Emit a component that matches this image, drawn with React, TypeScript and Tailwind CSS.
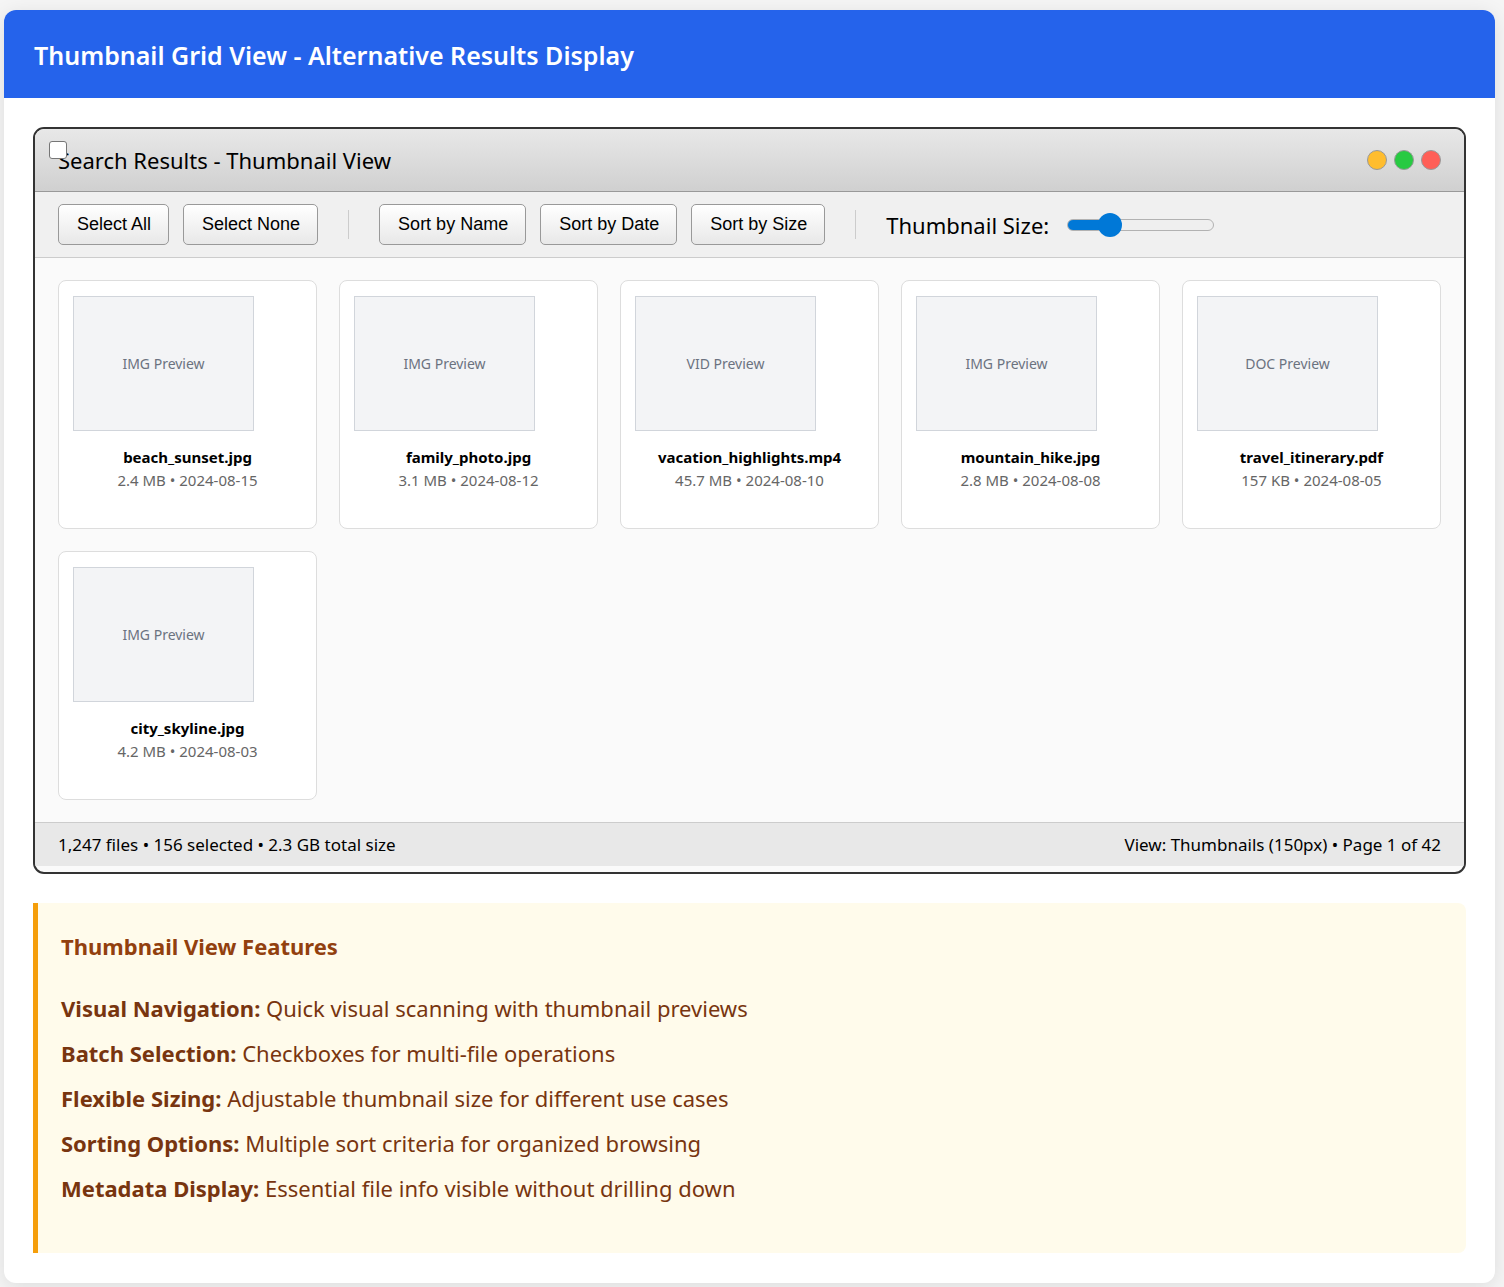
import React from "react";

const files = [
  { kind: "IMG", name: "beach_sunset.jpg", meta: "2.4 MB • 2024-08-15" },
  { kind: "IMG", name: "family_photo.jpg", meta: "3.1 MB • 2024-08-12" },
  { kind: "VID", name: "vacation_highlights.mp4", meta: "45.7 MB • 2024-08-10" },
  { kind: "IMG", name: "mountain_hike.jpg", meta: "2.8 MB • 2024-08-08" },
  { kind: "DOC", name: "travel_itinerary.pdf", meta: "157 KB • 2024-08-05" },
  { kind: "IMG", name: "city_skyline.jpg", meta: "4.2 MB • 2024-08-03" },
];

const features = [
  ["Visual Navigation:", "Quick visual scanning with thumbnail previews"],
  ["Batch Selection:", "Checkboxes for multi-file operations"],
  ["Flexible Sizing:", "Adjustable thumbnail size for different use cases"],
  ["Sorting Options:", "Multiple sort criteria for organized browsing"],
  ["Metadata Display:", "Essential file info visible without drilling down"],
];

function ToolButton({ children }: { children: React.ReactNode }) {
  return (
    <button
      type="button"
      className="h-[41px] shrink-0 rounded-[5px] border border-[#999] bg-linear-to-b from-white to-[#e8e8e8] pr-[17px] pb-0.5 pl-[18px] font-['Liberation_Sans',sans-serif] text-lg leading-5 text-black"
    >
      {children}
    </button>
  );
}

function Separator() {
  return <div className="mx-4 h-[29px] w-px shrink-0 bg-[#ccc]" />;
}

export default function App() {
  return (
    <div className="bg-[#f5f5f5] pt-[10px] pr-[9px] pb-1 pl-1 font-['Noto_Sans','Open_Sans',sans-serif] text-black">
      <main className="overflow-clip rounded-xl bg-white shadow-[0_4px_20px_rgba(0,0,0,0.1)]">
        <header className="bg-[#2563eb] px-[30px] pt-[27px] pb-[25px]">
          <h1 className="text-[25px] leading-9 font-semibold text-white">
            Thumbnail Grid View - Alternative Results Display
          </h1>
        </header>

        <div className="flex flex-col gap-[29px] px-[29px] pt-[29px] pb-[30px]">
          <section className="relative overflow-hidden rounded-[11px] border-2 border-[#333] bg-[#fafafa] pb-[6px]">
            <div className="flex h-[63px] items-center justify-between border-b border-[#999] bg-linear-to-b from-[#e8e8e8] to-[#d0d0d0] px-[23px]">
              <h2 className="text-[22px] leading-8">Search Results - Thumbnail View</h2>
              <div className="flex gap-[7px]">
                <button type="button" aria-label="Minimize" className="size-5 rounded-full border border-[#999] bg-[#ffbd2e]" />
                <button type="button" aria-label="Maximize" className="size-5 rounded-full border border-[#999] bg-[#28ca42]" />
                <button type="button" aria-label="Close" className="size-5 rounded-full border border-[#999] bg-[#ff5f57]" />
              </div>
            </div>
            <input
              type="checkbox"
              aria-label="Select file"
              className="absolute top-3 left-[14px] size-[18px] appearance-none rounded-[3px] border border-[#767676] bg-white checked:bg-[#0078d7]"
            />

            <div className="flex h-[66px] items-center border-b border-[#ccc] bg-[#f0f0f0] px-[23px]">
              <div className="flex gap-[14px]">
                <ToolButton>Select All</ToolButton>
                <ToolButton>Select None</ToolButton>
                <div className="flex items-center">
                  <Separator />
                </div>
                <ToolButton>Sort by Name</ToolButton>
                <ToolButton>Sort by Date</ToolButton>
                <ToolButton>Sort by Size</ToolButton>
                <div className="flex items-center">
                  <Separator />
                </div>
              </div>
              <label htmlFor="thumb-size" className="ml-[14px] text-[22px] leading-8">
                Thumbnail Size:
              </label>
              <input
                id="thumb-size"
                type="range"
                min={100}
                max={300}
                defaultValue={150}
                className="ml-[18px] h-3 w-[147px] appearance-none rounded-full border border-[#b2b2b2] bg-[linear-gradient(to_right,#0078d7_28%,#efefef_28%)] [&::-webkit-slider-thumb]:size-6 [&::-webkit-slider-thumb]:appearance-none [&::-webkit-slider-thumb]:rounded-full [&::-webkit-slider-thumb]:bg-[#0078d7]"
              />
            </div>

            <div className="grid grid-cols-5 gap-[22px] px-[23px] py-[22px]">
              {files.map((f) => (
                <article key={f.name} className="h-[249px] rounded-lg border border-[#ddd] bg-white px-[14px] pt-[15px] text-center">
                  <div className="flex h-[135px] w-[181px] items-center justify-center border border-[#d1d5db] bg-[#f3f4f6] text-sm text-[#6b7280]">
                    {f.kind} Preview
                  </div>
                  <h3 className="mt-[15px] text-[15px] leading-[22px] font-bold">{f.name}</h3>
                  <p className="text-[15px] leading-6 text-[#666]">{f.meta}</p>
                </article>
              ))}
            </div>

            <footer className="flex h-11 items-center justify-between border-t border-[#ccc] bg-[#e8e8e8] px-[23px] text-[17px] leading-6">
              <span>1,247 files • 156 selected • 2.3 GB total size</span>
              <span>View: Thumbnails (150px) • Page 1 of 42</span>
            </footer>
          </section>

          <section className="rounded-r-lg border-l-[5px] border-[#f59e0b] bg-[#fffbeb] px-[23px] pt-[27px] pb-[42px]">
            <h2 className="text-[22px] leading-8 font-bold text-[#92400e]">Thumbnail View Features</h2>
            <ul className="mt-6 text-[22px] leading-[45px] text-[#78350f]">
              {features.map(([title, text]) => (
                <li key={title}>
                  <strong className="font-bold">{title}</strong> {text}
                </li>
              ))}
            </ul>
          </section>
        </div>
      </main>
    </div>
  );
}
